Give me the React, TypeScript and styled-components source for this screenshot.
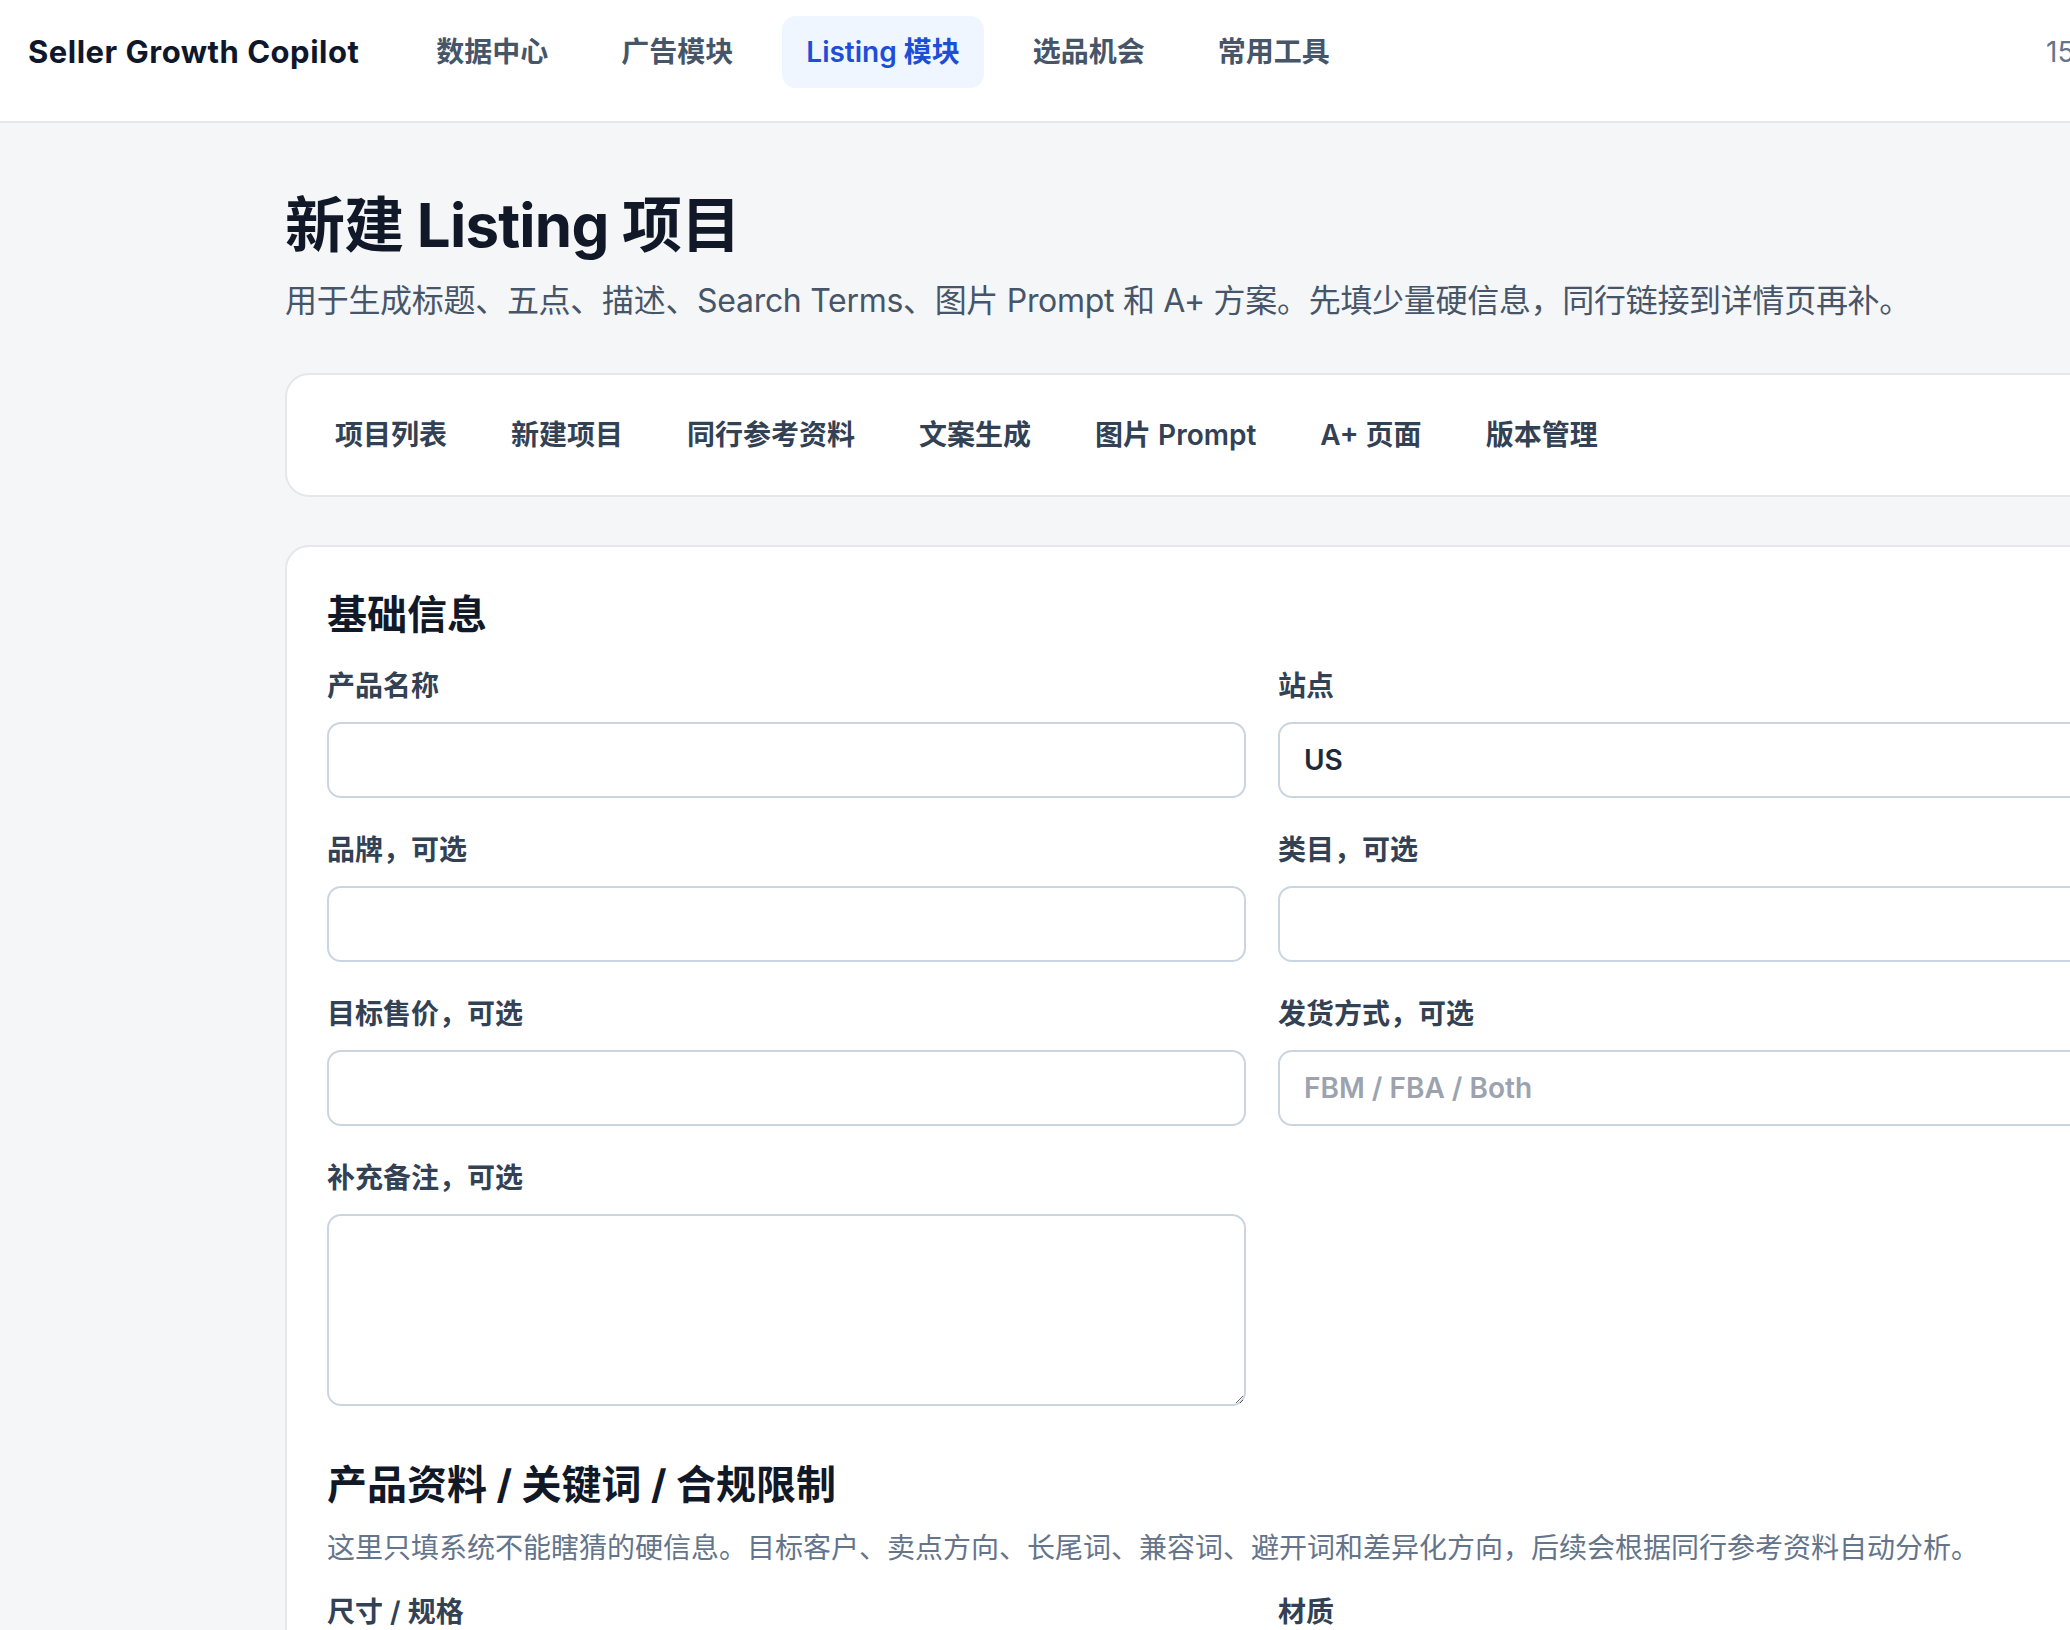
import { createGlobalStyle, styled } from 'styled-components';

const GlobalStyle = createGlobalStyle`
  html, body {
    margin: 0;
    padding: 0;
    overflow: hidden;
    background: #f5f6f8;
  }
  body {
    font-family: Inter, "Noto Sans CJK SC", "Noto Sans", sans-serif;
    color: #111827;
    -webkit-font-smoothing: antialiased;
  }
  * { box-sizing: border-box; }
`;

/* page is wider than the window, the right side gets cut */
const Page = styled.div`
  width: 2524px;
  min-height: 1630px;
  background: #f5f6f8;
`;

const TopBar = styled.header`
  display: flex;
  align-items: flex-start;
  min-height: 123px;
  padding: 16px 28px 0;
  background: #ffffff;
  border-bottom: 2px solid #e5e7eb;
`;

const Brand = styled.div`
  font-size: 31px;
  font-weight: 700;
  line-height: 72px;
  color: #0f172a;
  letter-spacing: 0.5px;
  white-space: nowrap;
`;

const Nav = styled.nav`
  display: flex;
  gap: 25px;
  margin-left: 53px;
`;

const NavItem = styled.a<{ $active?: boolean }>`
  display: block;
  height: 72px;
  padding: 0 24px;
  border-radius: 14px;
  font-size: 28px;
  font-weight: 600;
  line-height: 72px;
  white-space: nowrap;
  text-decoration: none;
  color: ${(p) => (p.$active ? '#1d4ed8' : '#475569')};
  background: ${(p) => (p.$active ? '#eff6ff' : 'transparent')};
`;

const Status = styled.div`
  width: 450px;
  margin-left: auto;
  font-size: 28px;
  line-height: 72px;
  color: #64748b;
  white-space: nowrap;
`;

const Main = styled.main`
  width: 1954px;
  margin: 0 auto;
  padding: 66px 0 80px;
`;

const Title = styled.h1`
  margin: 0;
  font-size: 60px;
  font-weight: 700;
  line-height: 72px;
  letter-spacing: -0.8px;
  color: #111827;
`;

const Lead = styled.p`
  margin: 16px 0 0;
  font-size: 32px;
  line-height: 48px;
  letter-spacing: -0.3px;
  color: #475569;
`;

const TabCard = styled.div`
  display: flex;
  gap: 24px;
  margin-top: 48px;
  padding: 20px 28px;
  background: #ffffff;
  border: 2px solid #e5e7eb;
  border-radius: 24px;
`;

const Tab = styled.button`
  padding: 20px 20px;
  border: 0;
  background: transparent;
  font-family: inherit;
  font-size: 28px;
  font-weight: 600;
  line-height: 40px;
  color: #334155;
  white-space: nowrap;
`;

const FormCard = styled.section`
  margin-top: 48px;
  padding: 40px 40px 60px;
  background: #ffffff;
  border: 2px solid #e5e7eb;
  border-radius: 24px;
`;

const Block = styled.div`
  & + & {
    margin-top: 51px;
  }
`;

const SectionTitle = styled.h2<{ $tight?: boolean }>`
  margin: 0 0 ${(p) => (p.$tight ? '15px' : '23px')};
  font-size: 40px;
  font-weight: 700;
  line-height: 56px;
  color: #111827;
`;

const Hint = styled.p`
  margin: 0 0 24px;
  font-size: 28px;
  line-height: 40px;
  color: #64748b;
`;

const Grid = styled.div`
  display: grid;
  grid-template-columns: 1fr 1fr;
  column-gap: 32px;
  row-gap: 32px;
`;

const Field = styled.label`
  display: flex;
  flex-direction: column;
  gap: 16px;
`;

const FieldLabel = styled.span`
  font-size: 28px;
  font-weight: 600;
  line-height: 40px;
  color: #334155;
`;

const controlCss = `
  width: 100%;
  border: 2px solid #cbd5e1;
  border-radius: 14px;
  background: #ffffff;
  font-family: inherit;
  font-size: 28px;
  font-weight: 600;
  color: #1f2937;
  outline: none;
  &::placeholder { color: #9ca3af; }
`;

const TextInput = styled.input`
  ${controlCss}
  height: 76px;
  padding: 0 24px;
`;

const Select = styled.select`
  ${controlCss}
  height: 76px;
  padding: 0 24px;
  appearance: none;
`;

const TextArea = styled.textarea`
  ${controlCss}
  height: 192px;
  padding: 20px 24px;
  resize: vertical;
`;

const navItems = ['数据中心', '广告模块', 'Listing 模块', '选品机会', '常用工具'];
const tabs = ['项目列表', '新建项目', '同行参考资料', '文案生成', '图片 Prompt', 'A+ 页面', '版本管理'];

export default function App() {
  return (
    <>
      <GlobalStyle />
      <Page>
        <TopBar>
          <Brand>Seller Growth Copilot</Brand>
          <Nav>
            {navItems.map((n) => (
              <NavItem key={n} $active={n === 'Listing 模块'}>
                {n}
              </NavItem>
            ))}
          </Nav>
          <Status>1536 × 本地工作区 · 已保存</Status>
        </TopBar>

        <Main>
          <Title>新建 Listing 项目</Title>
          <Lead>
            用于生成标题、五点、描述、Search Terms、图片 Prompt 和 A+ 方案。先填少量硬信息，同行链接到详情页再补。
          </Lead>

          <TabCard>
            {tabs.map((t) => (
              <Tab key={t}>{t}</Tab>
            ))}
          </TabCard>

          <FormCard>
            <Block>
              <SectionTitle>基础信息</SectionTitle>
              <Grid>
                <Field>
                  <FieldLabel>产品名称</FieldLabel>
                  <TextInput />
                </Field>
                <Field>
                  <FieldLabel>站点</FieldLabel>
                  <Select defaultValue="US">
                    <option value="US">US</option>
                    <option value="UK">UK</option>
                    <option value="DE">DE</option>
                    <option value="JP">JP</option>
                  </Select>
                </Field>
                <Field>
                  <FieldLabel>品牌，可选</FieldLabel>
                  <TextInput />
                </Field>
                <Field>
                  <FieldLabel>类目，可选</FieldLabel>
                  <TextInput />
                </Field>
                <Field>
                  <FieldLabel>目标售价，可选</FieldLabel>
                  <TextInput />
                </Field>
                <Field>
                  <FieldLabel>发货方式，可选</FieldLabel>
                  <TextInput placeholder="FBM / FBA / Both" />
                </Field>
                <Field>
                  <FieldLabel>补充备注，可选</FieldLabel>
                  <TextArea />
                </Field>
              </Grid>
            </Block>

            <Block>
              <SectionTitle $tight>产品资料 / 关键词 / 合规限制</SectionTitle>
              <Hint>
                这里只填系统不能瞎猜的硬信息。目标客户、卖点方向、长尾词、兼容词、避开词和差异化方向，后续会根据同行参考资料自动分析。
              </Hint>
              <Grid>
                <Field>
                  <FieldLabel>尺寸 / 规格</FieldLabel>
                  <TextInput />
                </Field>
                <Field>
                  <FieldLabel>材质</FieldLabel>
                  <TextInput />
                </Field>
              </Grid>
            </Block>
          </FormCard>
        </Main>
      </Page>
    </>
  );
}
